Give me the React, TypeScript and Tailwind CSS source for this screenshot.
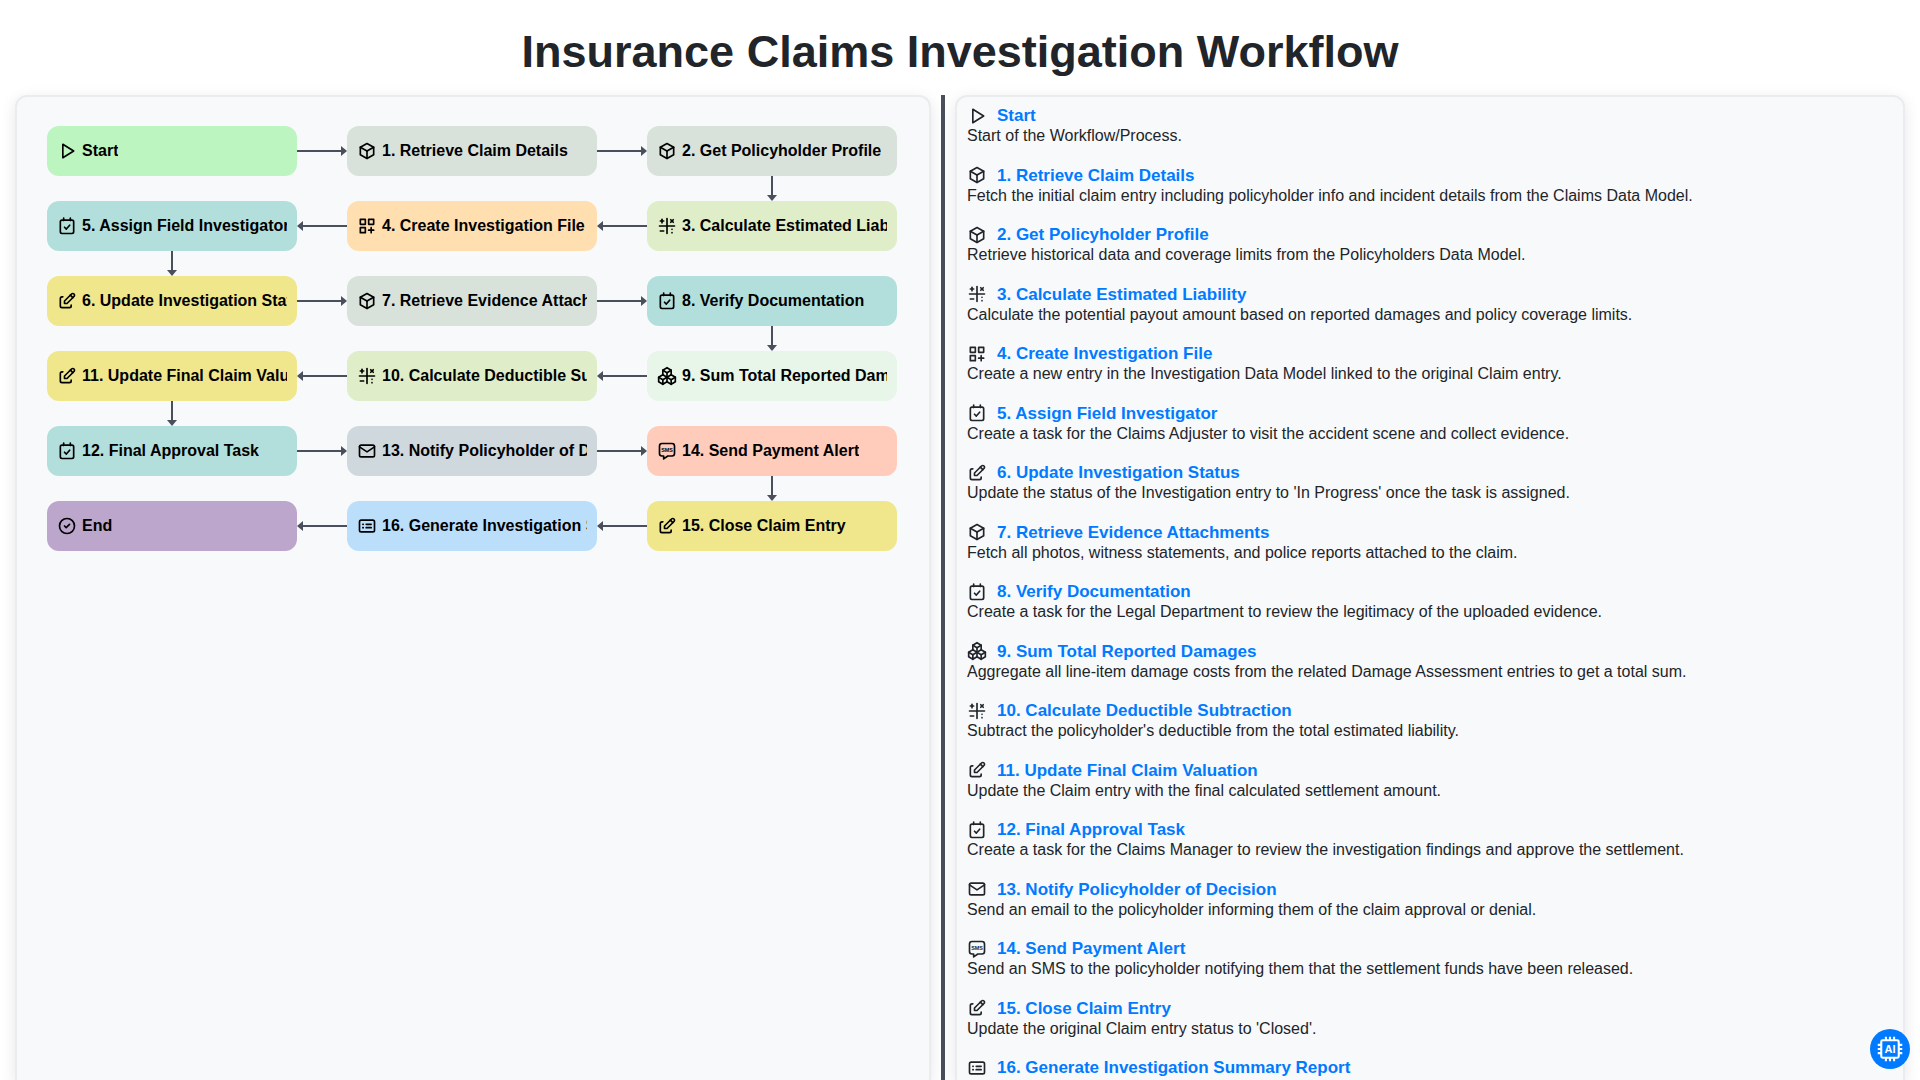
import {
  TbBox,
  TbCategoryPlus,
  TbCircleCheck,
  TbEdit,
  TbMathSymbols,
  TbPackages,
  TbPlayerPlay,
} from "react-icons/tb";
import type { ComponentType } from "react";

const font = { fontFamily: '"Liberation Sans", Arial, sans-serif' };

type IconProps = { className?: string };

function TaskIcon({ className }: IconProps) {
  return (
    <svg viewBox="0 0 24 24" fill="none" stroke="currentColor" strokeWidth="2" strokeLinecap="round" strokeLinejoin="round" className={className}>
      <rect x="4" y="5" width="16" height="16" rx="2" />
      <path d="M8 2.5v3M16 2.5v3M9 13.5l2.2 2.2 4-4.7" />
    </svg>
  );
}

function SmsIcon({ className }: IconProps) {
  return (
    <svg viewBox="0 0 24 24" fill="none" stroke="currentColor" strokeWidth="2" strokeLinecap="round" strokeLinejoin="round" className={className}>
      <path d="M18 3a3 3 0 0 1 3 3v9a3 3 0 0 1 -3 3h-5l-5 3.5v-3.5h-2a3 3 0 0 1 -3 -3v-9a3 3 0 0 1 3 -3h12z" />
      <text x="12" y="13.2" textAnchor="middle" fontSize="6.5" fontWeight="700" fill="currentColor" stroke="none" fontFamily="Liberation Sans">
        SMS
      </text>
    </svg>
  );
}

function ReportIcon({ className }: IconProps) {
  return (
    <svg viewBox="0 0 24 24" fill="none" stroke="currentColor" strokeWidth="2" strokeLinecap="round" strokeLinejoin="round" className={className}>
      <rect x="3" y="5" width="18" height="14" rx="2" />
      <path d="M7 10h.5M11 10h6M7 14h.5M11 14h6" />
    </svg>
  );
}

function MailIcon({ className }: IconProps) {
  return (
    <svg viewBox="0 0 24 24" fill="none" stroke="currentColor" strokeWidth="2" strokeLinecap="round" strokeLinejoin="round" className={className}>
      <rect x="3" y="5" width="18" height="14" rx="2" />
      <path d="M3 7l9 6 9-6" />
    </svg>
  );
}

function ChipIcon({ className }: IconProps) {
  return (
    <svg viewBox="0 0 24 24" fill="none" stroke="currentColor" strokeWidth="1.8" className={className}>
      <rect x="4.5" y="4.5" width="15" height="15" rx="1.2" />
      <path d="M8.5 1.5v3M12 1.5v3M15.5 1.5v3M8.5 19.5v3M12 19.5v3M15.5 19.5v3M1.5 8.5h3M1.5 12h3M1.5 15.5h3M19.5 8.5h3M19.5 12h3M19.5 15.5h3" />
      <text x="12" y="15.4" textAnchor="middle" fontSize="9.5" fontWeight="700" fill="currentColor" stroke="none" fontFamily="Liberation Sans">
        AI
      </text>
    </svg>
  );
}

type Step = { title: string; desc?: string; icon: ComponentType<IconProps>; color: string };

const STEPS: Step[] = [
  { title: "Start", desc: "Start of the Workflow/Process.", icon: TbPlayerPlay, color: "bg-[#bdf5c0]" },
  { title: "1. Retrieve Claim Details", desc: "Fetch the initial claim entry including policyholder info and incident details from the Claims Data Model.", icon: TbBox, color: "bg-[#d8e2da]" },
  { title: "2. Get Policyholder Profile", desc: "Retrieve historical data and coverage limits from the Policyholders Data Model.", icon: TbBox, color: "bg-[#d8e2da]" },
  { title: "3. Calculate Estimated Liability", desc: "Calculate the potential payout amount based on reported damages and policy coverage limits.", icon: TbMathSymbols, color: "bg-[#dfedc8]" },
  { title: "4. Create Investigation File", desc: "Create a new entry in the Investigation Data Model linked to the original Claim entry.", icon: TbCategoryPlus, color: "bg-[#ffdeb0]" },
  { title: "5. Assign Field Investigator", desc: "Create a task for the Claims Adjuster to visit the accident scene and collect evidence.", icon: TaskIcon, color: "bg-[#b2dfdb]" },
  { title: "6. Update Investigation Status", desc: "Update the status of the Investigation entry to 'In Progress' once the task is assigned.", icon: TbEdit, color: "bg-[#f0e68c]" },
  { title: "7. Retrieve Evidence Attachments", desc: "Fetch all photos, witness statements, and police reports attached to the claim.", icon: TbBox, color: "bg-[#d8e2da]" },
  { title: "8. Verify Documentation", desc: "Create a task for the Legal Department to review the legitimacy of the uploaded evidence.", icon: TaskIcon, color: "bg-[#b2dfdb]" },
  { title: "9. Sum Total Reported Damages", desc: "Aggregate all line-item damage costs from the related Damage Assessment entries to get a total sum.", icon: TbPackages, color: "bg-[#e8f5e9]" },
  { title: "10. Calculate Deductible Subtraction", desc: "Subtract the policyholder's deductible from the total estimated liability.", icon: TbMathSymbols, color: "bg-[#dfedc8]" },
  { title: "11. Update Final Claim Valuation", desc: "Update the Claim entry with the final calculated settlement amount.", icon: TbEdit, color: "bg-[#f0e68c]" },
  { title: "12. Final Approval Task", desc: "Create a task for the Claims Manager to review the investigation findings and approve the settlement.", icon: TaskIcon, color: "bg-[#b2dfdb]" },
  { title: "13. Notify Policyholder of Decision", desc: "Send an email to the policyholder informing them of the claim approval or denial.", icon: MailIcon, color: "bg-[#cfd8dc]" },
  { title: "14. Send Payment Alert", desc: "Send an SMS to the policyholder notifying them that the settlement funds have been released.", icon: SmsIcon, color: "bg-[#ffccbc]" },
  { title: "15. Close Claim Entry", desc: "Update the original Claim entry status to 'Closed'.", icon: TbEdit, color: "bg-[#f0e68c]" },
  { title: "16. Generate Investigation Summary Report", icon: ReportIcon, color: "bg-[#bbdefb]" },
  { title: "End", icon: TbCircleCheck, color: "bg-[#bca6cc]" },
];

// snake order: odd rows run right to left
const ROWS = [0, 1, 2, 3, 4, 5].map((r) => {
  const part = STEPS.slice(r * 3, r * 3 + 3);
  return r % 2 === 0 ? part : [...part].reverse();
});

function Node({ step }: { step: Step }) {
  const Icon = step.icon;
  return (
    <div className={`flex h-[50px] w-[250px] shrink-0 items-center rounded-xl px-2.5 ${step.color}`}>
      <Icon className="mr-[5px] h-5 w-5 shrink-0 text-black" />
      <span className="overflow-hidden whitespace-nowrap text-[16px] font-bold leading-5 text-black">{step.title}</span>
    </div>
  );
}

function HArrow({ left }: { left?: boolean }) {
  return (
    <div className={`flex h-[50px] w-[50px] shrink-0 items-center ${left ? "flex-row-reverse" : ""}`}>
      <div className="h-[2px] flex-1 bg-[#4a4f5c]" />
      <div
        className={`h-0 w-0 border-y-[5px] border-y-transparent ${
          left ? "border-r-[6px] border-r-[#4a4f5c]" : "border-l-[6px] border-l-[#4a4f5c]"
        }`}
      />
    </div>
  );
}

function VArrow() {
  return (
    <div className="flex h-[25px] w-[250px] flex-col items-center">
      <div className="w-[2px] flex-1 bg-[#4a4f5c]" />
      <div className="h-0 w-0 border-x-[5px] border-t-[6px] border-x-transparent border-t-[#4a4f5c]" />
    </div>
  );
}

function Flow() {
  return (
    <div className="flex w-[850px] flex-col">
      {ROWS.map((row, r) => {
        const left = r % 2 === 1;
        return (
          <div key={r} className="flex flex-col">
            <div className="flex">
              <Node step={row[0]} />
              <HArrow left={left} />
              <Node step={row[1]} />
              <HArrow left={left} />
              <Node step={row[2]} />
            </div>
            <div className={`flex h-[25px] ${left ? "justify-start" : "justify-end"}`}>
              {r < 5 && <VArrow />}
            </div>
          </div>
        );
      })}
    </div>
  );
}

function Entry({ step }: { step: Step }) {
  const Icon = step.icon;
  return (
    <div className="mb-[18px]">
      <div className="flex h-[21px] items-center">
        <Icon className="mr-[10px] h-5 w-5 shrink-0 text-[#212529]" />
        <span className="text-[17px] font-bold leading-[21px] text-[#007bff]">{step.title}</span>
      </div>
      {step.desc && <p className="text-[16px] leading-[20.5px] text-[#212529]">{step.desc}</p>}
    </div>
  );
}

export default function App() {
  return (
    <div className="relative h-screen overflow-hidden bg-white" style={font}>
      <h1 className="pt-5 pb-[11px] text-center text-[45px] font-bold leading-[64px] text-[#212529]">
        Insurance Claims Investigation Workflow
      </h1>
      <div className="flex h-[985px] px-[15px]">
        <div className="w-[916px] shrink-0 rounded-t-xl border-2 border-b-0 border-[#ebecf0] bg-[#f8f9fb] px-[30px] pt-[29px] shadow-[0_4px_16px_rgba(0,0,0,0.1)]">
          <Flow />
        </div>
        <div className="mx-[10px] w-1 shrink-0 bg-[#4a4f5c]" />
        <div className="min-w-0 flex-1 overflow-hidden rounded-t-xl border-2 border-b-0 border-[#ebecf0] bg-[#f8f9fb] px-[10px] pt-[8px] shadow-[0_4px_16px_rgba(0,0,0,0.1)]">
          {STEPS.slice(0, 17).map((s) => (
            <Entry key={s.title} step={s} />
          ))}
        </div>
      </div>
      <button
        type="button"
        className="absolute right-[10px] bottom-[11px] flex h-10 w-10 items-center justify-center rounded-full bg-[#007bff] text-white"
      >
        <ChipIcon className="h-7 w-7" />
      </button>
    </div>
  );
}
